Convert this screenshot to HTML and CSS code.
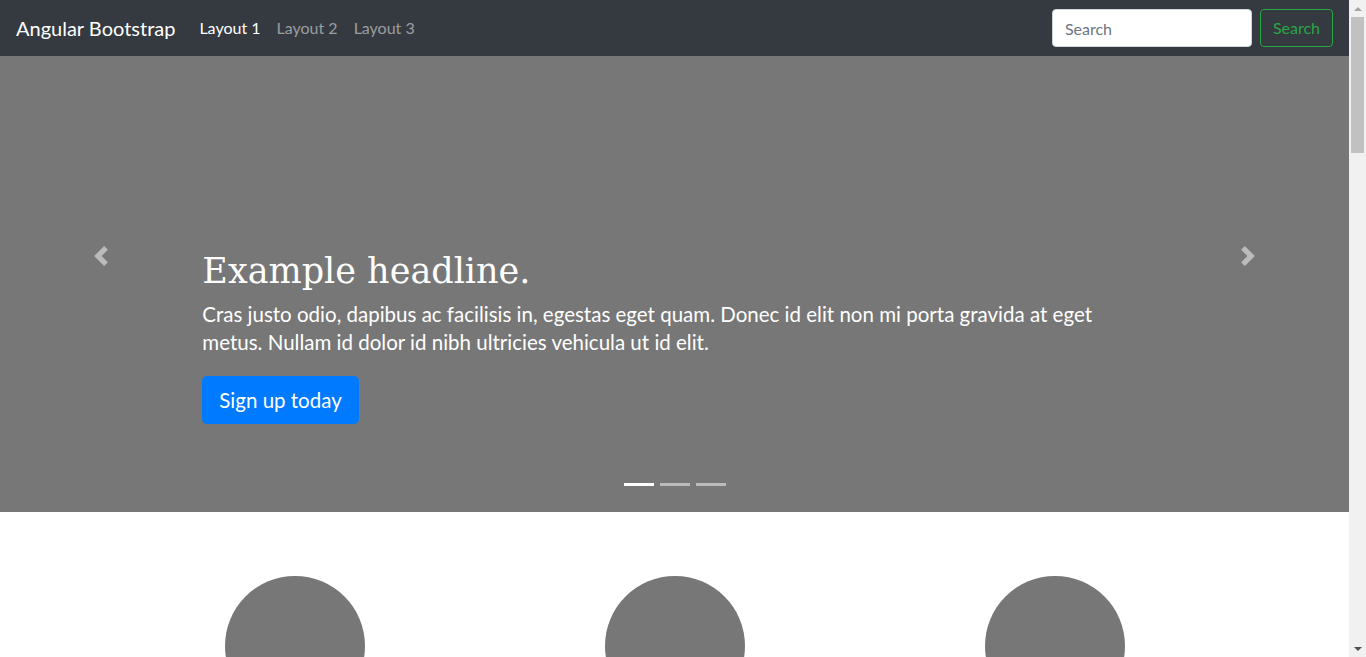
FILE: index.html
```html
<!DOCTYPE html>
<html lang="en">
<head>
<meta charset="utf-8">
<title>Angular Bootstrap</title>
<link rel="stylesheet" href="styles.css">
</head>
<body>
<div class="page">
  <nav class="navbar">
    <a class="brand" href="#">Angular Bootstrap</a>
    <ul class="nav">
      <li><a class="nav-link active" href="#">Layout 1</a></li>
      <li><a class="nav-link" href="#">Layout 2</a></li>
      <li><a class="nav-link" href="#">Layout 3</a></li>
    </ul>
    <form class="search">
      <input class="search-input" type="text" placeholder="Search">
      <button class="search-btn" type="button">Search</button>
    </form>
  </nav>
  <main>
    <section class="carousel">
      <a class="control" href="#" aria-label="Previous">
        <svg class="control-icon" viewBox="0 0 8 8"><path d="M5.25 0l-4 4 4 4 1.5-1.5-2.5-2.5 2.5-2.5-1.5-1.5z"/></svg>
      </a>
      <div class="slide-spacer"></div>
      <a class="control" href="#" aria-label="Next">
        <svg class="control-icon" viewBox="0 0 8 8"><path d="M2.75 0l-1.5 1.5 2.5 2.5-2.5 2.5 1.5 1.5 4-4-4-4z"/></svg>
      </a>
      <div class="caption">
        <h1 class="headline">Example headline.</h1>
        <p class="lead">Cras justo odio, dapibus ac facilisis in, egestas eget quam. Donec id elit non mi porta gravida at eget metus. Nullam id dolor id nibh ultricies vehicula ut id elit.</p>
        <p class="cta"><a class="btn-primary" href="#">Sign up today</a></p>
      </div>
      <ol class="indicators">
        <li class="ind active"></li>
        <li class="ind"></li>
        <li class="ind"></li>
      </ol>
    </section>
    <section class="marketing">
      <div class="col"><div class="circle"></div></div>
      <div class="col"><div class="circle"></div></div>
      <div class="col"><div class="circle"></div></div>
    </section>
  </main>
</div>
<div class="scrollbar" aria-hidden="true">
  <div class="sb-btn"><span class="sb-arrow up"></span></div>
  <div class="sb-track"><div class="sb-thumb"></div></div>
  <div class="sb-btn"><span class="sb-arrow down"></span></div>
</div>
</body>
</html>
```
FILE: styles.css
```css
* { box-sizing: border-box; }
html, body { margin: 0; padding: 0; }
body {
  font-family: "Lato", "Noto Sans", sans-serif;
  font-size: 16px;
  line-height: 1.5;
  color: #212529;
  background: #fff;
  display: flex;
  height: 657px;
  overflow: hidden;
}
.page {
  flex: 1;
  position: relative;
  overflow: hidden;
}
.navbar {
  position: absolute;
  top: 0; left: 0; right: 0;
  z-index: 100;
  height: 56px;
  background: #343a40;
  display: flex;
  align-items: center;
  padding: 8px 16px;
}
.brand {
  color: #fff;
  font-size: 20px;
  text-decoration: none;
  margin-right: 16px;
  line-height: 30px;
}
.nav {
  display: flex;
  list-style: none;
  margin: 0;
  padding: 0;
  flex: 1;
}
.nav-link {
  display: block;
  padding: 8px;
  color: rgba(255,255,255,.5);
  text-decoration: none;
}
.nav-link.active { color: #fff; }
.search { display: flex; align-items: center; margin: 0; }
.search-input {
  width: 200px;
  height: 38px;
  padding: 6px 12px;
  font: inherit;
  color: #495057;
  background: #fff;
  border: 1px solid #ced4da;
  border-radius: 4px;
  margin-right: 8px;
}
.search-input::placeholder { color: #6c757d; }
.search-btn {
  height: 38px;
  padding: 6px 12px;
  font: inherit;
  color: #28a745;
  background: transparent;
  border: 1px solid #28a745;
  border-radius: 4px;
}
.carousel {
  position: relative;
  height: 512px;
  background: #777;
  display: flex;
  margin-bottom: 64px;
}
.control {
  width: 15%;
  display: flex;
  align-items: center;
  justify-content: center;
  opacity: .5;
}
.slide-spacer { flex: 1; }
.control-icon { width: 20px; height: 20px; fill: #fff; }
.caption {
  position: absolute;
  left: 15%;
  right: 15%;
  bottom: 48px;
  padding: 20px 0;
  color: #fff;
}
.headline {
  font-family: "DejaVu Serif", Georgia, serif;
  font-weight: normal;
  font-size: 35px;
  line-height: 1.2;
  margin: 0 0 8px;
}
.lead {
  font-size: 20.5px;
  line-height: 28px;
  margin: 0 0 20px;
}
.cta { margin: 0 0 20px; line-height: 1; }
.btn-primary {
  display: inline-block;
  color: #fff;
  background: #007bff;
  border: 1px solid #007bff;
  border-radius: 4.8px;
  padding: 8px 16px;
  font-size: 20.5px;
  line-height: 30px;
  text-decoration: none;
  vertical-align: top;
}
.indicators {
  position: absolute;
  left: 0; right: 0;
  bottom: 10px;
  margin: 0 0 16px;
  padding: 0;
  list-style: none;
  display: flex;
  justify-content: center;
}
.ind {
  width: 30px;
  height: 3px;
  margin: 0 3px;
  background: #fff;
  opacity: .5;
}
.ind.active { opacity: 1; }
.marketing {
  width: 1140px;
  margin: 0 auto;
  display: flex;
}
.col {
  flex: 1;
  padding: 0 15px;
}
.circle {
  width: 140px;
  height: 140px;
  border-radius: 50%;
  background: #777;
  margin: 0 auto;
}
.scrollbar {
  width: 17px;
  flex: none;
  background: #f1f1f1;
  display: flex;
  flex-direction: column;
}
.sb-btn {
  height: 17px;
  display: flex;
  align-items: center;
  justify-content: center;
}
.sb-arrow {
  width: 0; height: 0;
  border-left: 4px solid transparent;
  border-right: 4px solid transparent;
}
.sb-arrow.up { border-bottom: 4px solid #a3a3a3; }
.sb-arrow.down { border-top: 4px solid #505050; }
.sb-track { flex: 1; padding: 0 2px; }
.sb-thumb {
  height: 136px;
  background: #c1c1c1;
}
```
